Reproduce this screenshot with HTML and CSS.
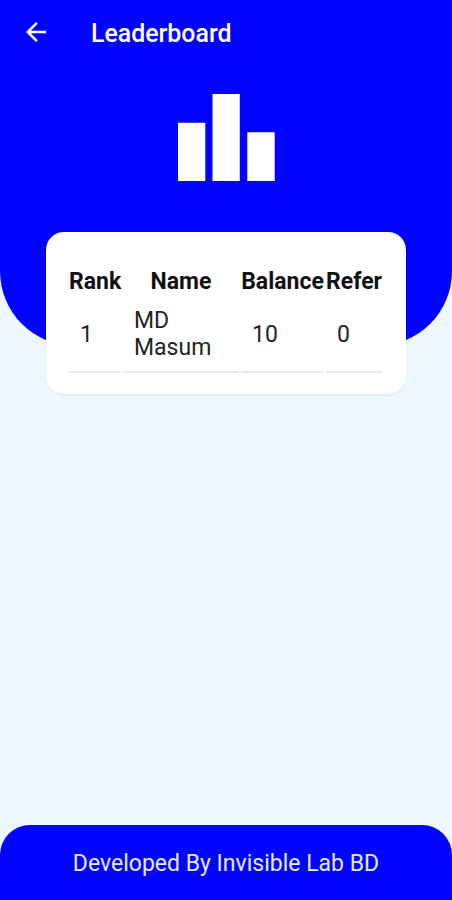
FILE: index.html
```html
<!DOCTYPE html>
<html lang="en">
<head>
<meta charset="utf-8">
<title>Leaderboard</title>
<link rel="stylesheet" href="styles.css">
</head>
<body>
<header class="hero">
  <div class="appbar">
    <svg class="back" viewBox="0 0 24 24" width="30" height="30"><path fill="currentColor" d="M20 11H7.83l5.59-5.59L12 4l-8 8 8 8 1.41-1.41L7.83 13H20z"/></svg>
    <h1 class="title">Leaderboard</h1>
  </div>
  <svg class="chart" viewBox="0 0 97 88" width="97" height="88"><path fill="#fff" d="M0 28.7h27.3V87H0zM34.5-.3h27.3V87H34.5zM69.3 38.3h27.4V87H69.3z"/></svg>
</header>
<main class="card">
  <table class="board">
    <thead><tr><th class="rank">Rank</th><th class="name">Name</th><th class="balance">Balance</th><th class="refer">Refer</th></tr></thead>
    <tbody><tr><td>1</td><td>MD Masum</td><td>10</td><td>0</td></tr></tbody>
  </table>
</main>
<footer class="footer">Developed By Invisible Lab BD</footer>
</body>
</html>
```
FILE: styles.css
```css
* { box-sizing: border-box; }
body {
  margin: 0;
  height: 900px;
  display: flex;
  flex-direction: column;
  background: #eef8ff;
  font-family: Roboto, "Liberation Sans", sans-serif;
  color: #242424;
}
.hero {
  height: 346px;
  flex: none;
  background: #0004ff;
  border-radius: 0 0 75px 75px;
  color: #fff;
}
.appbar {
  height: 66px;
  display: flex;
  align-items: center;
  padding-left: 21px;
  gap: 40px;
}
.back { margin-bottom: 2px; }
.title {
  margin: 2px 0 0;
  font-size: 24.9px;
  font-weight: 500;
  line-height: 30px;
}
.chart { display: block; margin: 28px 0 0 178px; }
.card {
  width: 360px;
  height: 162px;
  flex: none;
  margin: -114px 0 0 46px;
  padding: 34px 22px 0 21px;
  background: #fff;
  border-radius: 18px;
  box-shadow: 0 1px 2px rgba(0, 0, 0, 0.08);
}
.board {
  width: 317px;
  table-layout: fixed;
  border-collapse: separate;
  border-spacing: 2px;
  font-size: 23px;
  line-height: 27px;
}
.board th {
  padding: 0;
  color: #111;
  font-weight: 700;
  white-space: nowrap;
}
.board td {
  height: 76px;
  padding: 0 11px;
  border-bottom: 2px solid #ebebeb;
}
.rank { width: 52px; }
.name { width: 116px; }
.balance { width: 83px; }
.footer {
  height: 75px;
  margin-top: auto;
  padding-top: 1px;
  background: #0004ff;
  border-radius: 30px 30px 0 0;
  color: #e6e9ff;
  font-size: 23px;
  line-height: 75px;
  text-align: center;
}
```
